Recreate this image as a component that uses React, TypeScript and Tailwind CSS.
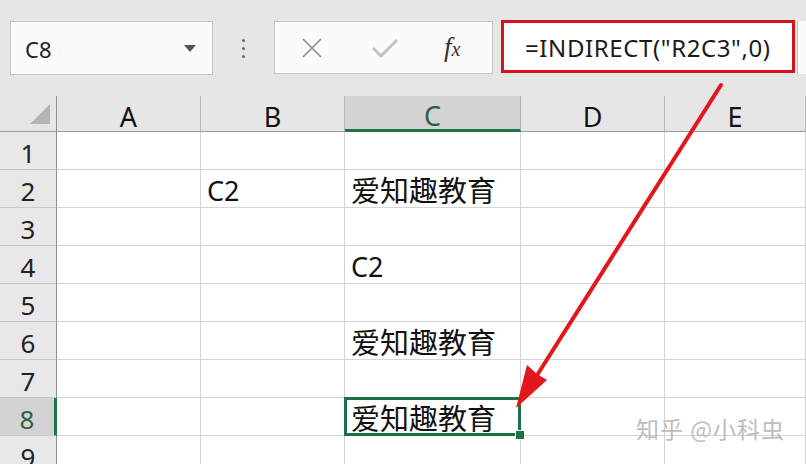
import React from "react";

const font = { fontFamily: '"Noto Sans", "Noto Sans CJK SC", sans-serif' };

const cols = ["A", "B", "C", "D", "E"];
const widths = ["w-[144px]", "w-[144px]", "w-[176px]", "w-[144px]", "flex-1"];

const data: Record<string, string> = {
  B2: "C2",
  C2: "爱知趣教育",
  C4: "C2",
  C6: "爱知趣教育",
  C8: "爱知趣教育",
};

function Row({ n }: { n: number }) {
  const sel = n === 8;
  return (
    <div className="flex h-[38px]">
      <div
        className={
          "w-[57px] shrink-0 flex items-center justify-center border-b border-b-[#c8c8c8] text-[26px] leading-none pt-[4px] " +
          (sel
            ? "bg-[#d3d3d3] text-[#2f5d43] border-r-[3px] border-r-[#217346]"
            : "bg-[#e8e8e8] text-[#222] border-r border-r-[#8f8f8f]")
        }
      >
        {n}
      </div>
      {cols.map((c, i) => {
        const key = c + n;
        const v = data[key];
        const selected = key === "C8";
        const cjk = v && /[\u4e00-\u9fff]/.test(v);
        return (
          <div
            key={c}
            className={
              widths[i] +
              " shrink-0 relative bg-white border-r border-b border-[#d4d4d4] flex items-center pt-[4px] leading-none text-[#111] pl-[6px] " +
              (cjk ? "text-[29px]" : "text-[27px]") +
              (selected ? " z-10" : "")
            }
          >
            {v}
            {selected && (
              <>
                <div className="absolute -left-[1px] -top-[1px] right-[-1px] bottom-[-1px] border-[3px] border-[#1e7145] pointer-events-none" />
                <div className="absolute right-[-5px] bottom-[-5px] w-[8px] h-[8px] bg-[#1e7145] border border-white box-content" />
              </>
            )}
          </div>
        );
      })}
    </div>
  );
}

export default function App() {
  return (
    <div className="relative w-[806px] h-[464px] overflow-hidden bg-white" style={font}>
      {/* top bar */}
      <div className="h-[96px] bg-[#e6e6e6] flex items-start pt-[20px]">
        <div className="ml-[10px] mt-[1px] w-[203px] h-[54px] bg-[#fbfbfb] border border-[#c4c4c4] flex items-center pl-[14px] pr-[16px]">
          <span className="text-[22px] text-[#222] pt-[2px]">C8</span>
          <span className="ml-auto w-0 h-0 border-l-[6px] border-r-[6px] border-t-[7px] border-l-transparent border-r-transparent border-t-[#555]" />
        </div>
        <div className="w-[61px] h-[56px] flex flex-col items-center justify-center gap-[5px]">
          <span className="w-[3px] h-[3px] rounded-full bg-[#666]" />
          <span className="w-[3px] h-[3px] rounded-full bg-[#666]" />
          <span className="w-[3px] h-[3px] rounded-full bg-[#666]" />
        </div>
        <div className="mt-[1px] w-[219px] h-[53px] bg-[#fbfbfb] border border-[#c4c4c4] flex items-center">
          <svg width="22" height="22" viewBox="0 0 22 22" className="ml-[26px]">
            <path d="M2 2 L20 20 M20 2 L2 20" stroke="#8a8a8a" strokeWidth="1.6" fill="none" />
          </svg>
          <svg width="28" height="22" viewBox="0 0 28 22" className="ml-[48px]">
            <path d="M2 11 L10 19 L26 3" stroke="#c2c2c2" strokeWidth="3" fill="none" strokeLinejoin="round" />
          </svg>
          <span
            className="ml-[45px] text-[27px] text-[#333] italic leading-none"
            style={{ fontFamily: '"Liberation Serif", serif' }}
          >
            f<span className="text-[20px]">x</span>
          </span>
        </div>
        <div className="ml-[8px] w-[294px] h-[53px] bg-white border-[3px] border-[#d2151b] flex items-center pl-[21px]">
          <span className="text-[24px] text-[#1a1a1a] leading-none pt-[2px] tracking-[0.6px]">=INDIRECT("R2C3",0)</span>
        </div>
        <div className="ml-[2px] mt-[1px] flex-1 h-[53px] bg-[#fbfbfb] border-l border-[#c4c4c4]" />
      </div>

      {/* column headers */}
      <div className="flex h-[36px] bg-[#e6e6e6]">
        <div className="w-[57px] shrink-0 relative border-r border-r-[#8f8f8f] border-b border-b-[#9a9a9a]">
          <svg className="absolute left-[30px] top-[8px]" width="20" height="20" viewBox="0 0 20 20">
            <polygon points="20,0 20,20 0,20" fill="#b5b5b5" />
          </svg>
        </div>
        {cols.map((c, i) => {
          const sel = c === "C";
          return (
            <div
              key={c}
              className={
                widths[i] +
                " shrink-0 flex items-center justify-center text-[27px] leading-none pt-[6px] " +
                (sel
                  ? "bg-[#d3d3d3] text-[#2f5d43] border-b-[3px] border-b-[#217346] border-r border-r-[#b0b0b0]"
                  : "text-[#111] border-b border-b-[#9a9a9a] border-r border-r-[#b8b8b8]")
              }
            >
              {c}
            </div>
          );
        })}
      </div>

      {[1, 2, 3, 4, 5, 6, 7, 8, 9].map((n) => (
        <Row key={n} n={n} />
      ))}

      {/* arrow overlay */}
      <svg className="absolute inset-0 pointer-events-none z-20" width="806" height="464" viewBox="0 0 806 464">
        <line x1="721" y1="85" x2="534" y2="380" stroke="#e3161b" strokeWidth="4" strokeLinecap="round" />
        <polygon points="516,408 527,365 537,374 547,380" fill="#e3161b" />
      </svg>

      {/* watermark */}
      <div
        className="absolute left-[636px] top-[417px] z-20 text-[23px] leading-none text-[#bdbdbd] tracking-[1px]"
        style={{ fontFamily: '"Noto Sans CJK SC", sans-serif' }}
      >
        知乎 @小科虫
      </div>
    </div>
  );
}
